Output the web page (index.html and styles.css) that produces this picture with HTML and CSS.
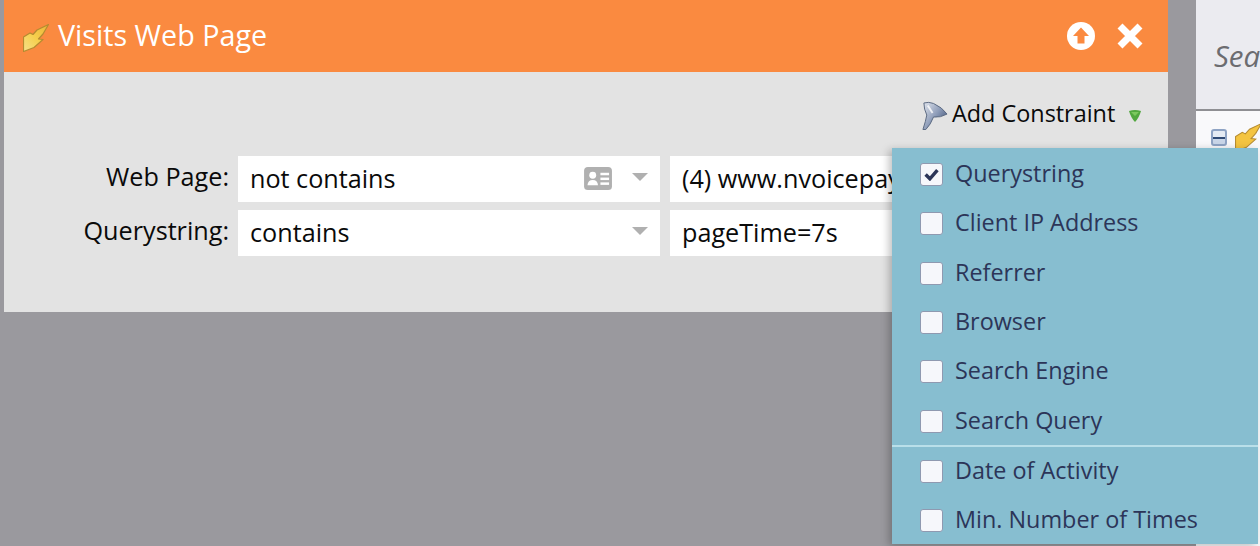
FILE: index.html
```html
<!DOCTYPE html>
<html lang="en">
<head>
<meta charset="utf-8">
<title>Visits Web Page</title>
<link rel="stylesheet" href="styles.css">
</head>
<body>
<div class="stage">
  <section class="dialog">
    <header class="head">
      <svg class="bolt" viewBox="0 0 26 28"><defs><linearGradient id="b" x1="0" y1="1" x2="1" y2="0"><stop offset="0" stop-color="#f5e08a"/><stop offset=".5" stop-color="#f6cf4c"/><stop offset="1" stop-color="#eab43a"/></linearGradient></defs><path d="M25.5 .5 L14 6 L10 10.5 L7 9 L.5 13 L.5 27.5 L11 23.5 L20 15.5 L15.5 15 L20 10 Z" fill="url(#b)" stroke="#b58b30" stroke-width="1.2" stroke-linejoin="round"/></svg>
      <h1 class="title">Visits Web Page</h1>
      <svg class="head-btn up" viewBox="0 0 28 28"><circle cx="14" cy="14" r="14" fill="#fff"/><path d="M14 5.5 L22 14 H17.5 V21.5 H10.5 V14 H6 Z" fill="#fb8a40"/></svg>
      <svg class="head-btn close" viewBox="0 0 26 26"><path d="M3 3 L23 23 M23 3 L3 23" stroke="#fff" stroke-width="7"/></svg>
    </header>
    <div class="body">
      <div class="toolbar">
        <svg class="funnel" viewBox="0 0 28 30"><defs><linearGradient id="f" x1="0" y1="0" x2="1" y2=".8"><stop offset="0" stop-color="#e6e9f0"/><stop offset=".55" stop-color="#8d9cb8"/><stop offset="1" stop-color="#3f5176"/></linearGradient></defs><path d="M3 1.5 Q8 0 13 2 Q22 6 27 13 Q20 17 13 16 Q10 24 5 29 L2 29 Q5 20 6 14 Q3 8 3 1.5 Z" fill="url(#f)" stroke="#5a6880" stroke-width="1"/><path d="M7 4 L12 12" stroke="#fff" stroke-width="2" opacity=".8"/></svg>
        <span class="add">Add Constraint</span>
        <svg class="green" viewBox="0 0 14 14"><path d="M1 2 Q7 0 13 2 Q11 9 7 13 Q3 9 1 2 Z" fill="#52a83f"/><path d="M3 3 H11 L7 7 Z" fill="#7cc95e"/></svg>
      </div>
      <div class="row">
        <label class="label">Web Page:</label>
        <div class="select"><span class="value">not contains</span>
          <svg class="card" viewBox="0 0 30 26"><rect width="29" height="24" rx="4" fill="#b0b0b0"/><circle cx="9" cy="8.5" r="3.6" fill="#fff"/><path d="M3.5 19 Q4 13.5 9 13.5 Q14 13.5 14.5 19 Z" fill="#fff"/><rect x="17" y="6" width="9" height="2.6" fill="#fff"/><rect x="17" y="11" width="9" height="2.6" fill="#fff"/><rect x="17" y="16" width="9" height="2.6" fill="#fff"/></svg>
          <span class="caret"></span></div>
        <div class="input">(4) www.nvoicepay.com/</div>
      </div>
      <div class="row">
        <label class="label">Querystring:</label>
        <div class="select"><span class="value">contains</span><span class="caret"></span></div>
        <div class="input">pageTime=7s</div>
      </div>
    </div>
  </section>
  <aside class="side">
    <div class="search">Search</div>
    <div class="tree">
      <span class="minus"></span>
      <svg class="bolt2" viewBox="0 0 26 28"><path d="M25.5 .5 L14 6 L10 10.5 L7 9 L.5 13 L.5 27.5 L11 23.5 L20 15.5 L15.5 15 L20 10 Z" fill="#f4c440" stroke="#b58b30" stroke-width="1"/></svg>
    </div>
  </aside>
  <ul class="menu">
    <li class="item"><span class="check"><svg viewBox="0 0 14 12"><path d="M1.5 6 L5.5 10 L12.5 2" fill="none" stroke="#2c3558" stroke-width="3.2"/></svg></span>Querystring</li>
    <li class="item"><span class="check"></span>Client IP Address</li>
    <li class="item"><span class="check"></span>Referrer</li>
    <li class="item"><span class="check"></span>Browser</li>
    <li class="item"><span class="check"></span>Search Engine</li>
    <li class="item"><span class="check"></span>Search Query</li>
    <li class="divider"></li>
    <li class="item"><span class="check"></span>Date of Activity</li>
    <li class="item"><span class="check"></span>Min. Number of Times</li>
  </ul>
</div>
</body>
</html>
```
FILE: styles.css
```css
* { box-sizing: border-box; }
html, body { margin: 0; padding: 0; height: 100%; overflow: hidden; }
body { background: #9a999e; font-family: "Open Sans", "Noto Sans", sans-serif; color: #0a0a0a; }
.stage { position: relative; width: 1260px; height: 546px; display: flex; padding-left: 4px; align-items: flex-start; overflow: hidden; }
.dialog { width: 1164px; height: 312px; background: #e3e3e3; flex: none; }
.head { height: 72px; background: #fa8a40; display: flex; align-items: center; padding-left: 19px; }
.bolt { width: 26px; height: 28px; margin-top: 4px; flex: none; }
.title { margin: -2px 0 0 9px; font-size: 28.7px; font-weight: 400; color: #fff; flex: 1; line-height: 1; }
.head-btn { flex: none; }
.up { width: 28px; height: 28px; }
.close { width: 26px; height: 26px; margin-left: 22px; margin-right: 25px; }
.body { padding: 25px 0 0 0; }
.toolbar { height: 36px; display: flex; align-items: center; padding-left: 917px; }
.funnel { width: 27px; height: 30px; flex: none; margin-top: 2px; }
.add { font-size: 23.4px; margin-left: 4px; line-height: 1; margin-top: -2px; }
.green { width: 14px; height: 14px; margin-left: 13px; margin-top: 2px; }
.row { display: flex; height: 46px; margin-top: 8px; align-items: stretch; }
.toolbar + .row { margin-top: 23px; }
.label { width: 225px; text-align: right; font-size: 25.2px; line-height: 40px; flex: none; }
.select { width: 422px; margin-left: 9px; background: #fff; display: flex; align-items: center; padding-left: 12px; flex: none; }
.value { flex: 1; font-size: 25.2px; margin-top: -2px; }
.card { width: 29px; height: 25px; margin-right: 19px; flex: none; }
.caret { width: 0; height: 0; border-left: 8px solid transparent; border-right: 8px solid transparent; border-top: 8px solid #b0b0b0; margin-right: 12px; margin-top: -4px; flex: none; }
.input { width: 400px; margin-left: 10px; background: #fff; padding-left: 12px; font-size: 25.2px; line-height: 44px; white-space: nowrap; overflow: hidden; flex: none; }
.side { width: 64px; margin-left: 28px; height: 546px; background: #fff; flex: none; display: flex; flex-direction: column; }
.search { height: 111px; background: #ebebf0; border-bottom: 2px solid #8f8f93; padding: 35px 0 0 18px; font-style: italic; font-size: 29.5px; color: #6c6c70; white-space: nowrap; overflow: hidden; flex: none; }
.tree { display: flex; align-items: flex-start; padding: 18px 0 0 15px; background: #f9f9fb; flex: 1; min-height: 0; overflow: hidden; }
.minus { width: 16px; height: 17px; border: 2px solid #8ea3c4; border-radius: 3px; background: linear-gradient(#e4eaf3 0 6px, #2f4a75 6px 8px, #c9d6e8 8px); flex: none; }
.bolt2 { width: 27px; height: 29px; margin-left: 8px; margin-top: -6px; flex: none; }
.menu { position: absolute; left: 892px; top: 148px; width: 366px; height: 396px; margin: 0; padding: 2px 0 0; list-style: none; background: #87bed0; box-shadow: -3px 2px 8px rgba(0,0,0,.25); color: #2c3558; }
.item { height: 49.3px; display: flex; align-items: center; padding: 0 0 3px 28px; font-size: 23.4px; white-space: nowrap; }
.check { width: 23px; height: 23px; background: #f6f7fb; border: 1px solid #8f99b0; border-radius: 3px; margin: 3px 12px 0 0; display: flex; align-items: center; justify-content: center; flex: none; }
.check svg { width: 15px; height: 13px; }
.divider { height: 2px; margin-top: -1px; background: #b9dfe9; }
```
